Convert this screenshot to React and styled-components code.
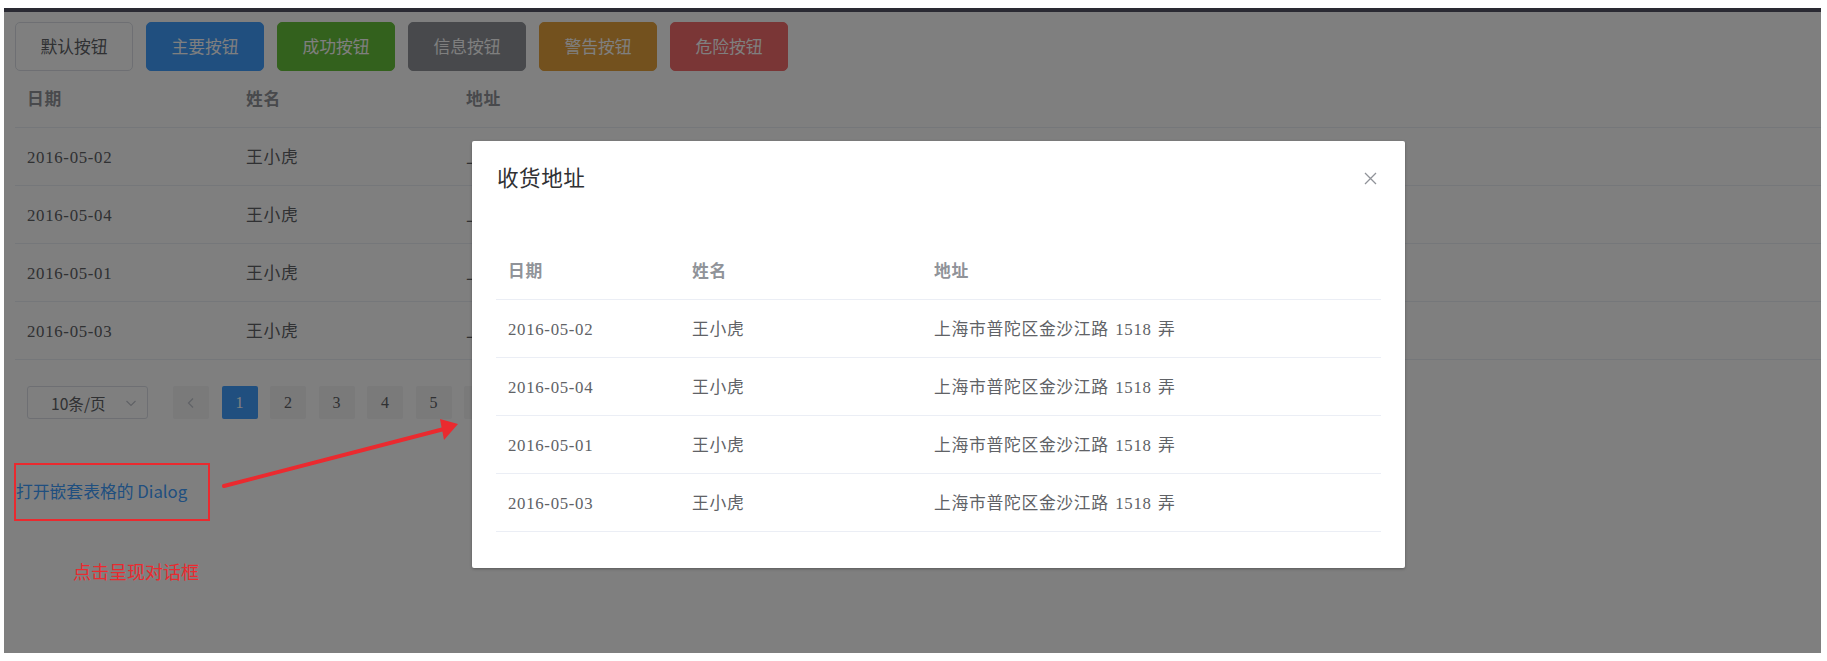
import React from 'react';
import styled, { createGlobalStyle } from 'styled-components';

const Global = createGlobalStyle`
  html, body { margin: 0; padding: 0; background: #fff; }
  body { width: 1827px; height: 661px; overflow: hidden; font-family: "Noto Sans CJK SC", sans-serif; }
  * { box-sizing: border-box; }
`;

const SANS = `"Noto Sans CJK SC", "Liberation Sans", sans-serif`;
const SERIF = `"Liberation Serif", "Noto Sans CJK SC", serif`;

const Shot = styled.div`
  position: relative;
  width: 1827px;
  height: 661px;
  padding: 8px 6px 8px 4px;
`;

const Frame = styled.div`
  position: relative;
  height: 100%;
  border-top: 4px solid #2a2a33;
  background: #fff;
  overflow: hidden;
`;

const Page = styled.div`
  padding: 10px 0 0 11px;
  display: flex;
  flex-direction: column;
  align-items: flex-start;
`;

const ButtonRow = styled.div`
  display: flex;
  gap: 13px;
`;

const variants = {
  default: { bg: '#fff', border: '#dcdfe6', color: '#606266' },
  primary: { bg: '#409eff', border: '#409eff', color: '#fff' },
  success: { bg: '#67c23a', border: '#67c23a', color: '#fff' },
  info: { bg: '#909399', border: '#909399', color: '#fff' },
  warning: { bg: '#e6a23c', border: '#e6a23c', color: '#fff' },
  danger: { bg: '#f56c6c', border: '#f56c6c', color: '#fff' },
};

const Btn = styled.button`
  width: 118px;
  height: 49px;
  padding: 0;
  border-radius: 5px;
  font-family: ${SANS};
  font-size: 16.8px;
  line-height: 1;
  background: ${(p) => variants[p.$type].bg};
  border: 1px solid ${(p) => variants[p.$type].border};
  color: ${(p) => variants[p.$type].color};
`;

const Table = styled.div`
  width: 100%;
`;

const Row = styled.div`
  display: grid;
  grid-template-columns: ${(p) => p.$cols};
  height: ${(p) => p.$h}px;
  border-bottom: 1px solid #ebeef5;
  align-items: center;
`;

const Cell = styled.div`
  padding: 2px 0 0 12px;
  font-family: ${SERIF};
  font-size: 16.8px;
  line-height: 20px;
  letter-spacing: 0.7px;
  word-spacing: 1.5px;
  white-space: nowrap;
  overflow: hidden;
  color: ${(p) => (p.$head ? '#909399' : '#606266')};
  font-weight: ${(p) => (p.$head ? 700 : 400)};
`;

const Pager = styled.div`
  display: flex;
  align-items: center;
  margin-top: 26px;
  padding-left: 12px;
`;

const SizeSelect = styled.div`
  width: 121px;
  height: 33px;
  border: 1px solid #dcdfe6;
  border-radius: 3px;
  display: flex;
  align-items: center;
  justify-content: space-between;
  padding: 0 10px 0 23px;
  margin-right: 25px;
  font-family: ${SANS};
  font-size: 15.6px;
  color: #606266;
`;

const Pages = styled.div`
  display: flex;
  gap: 12.5px;
`;

const PageBtn = styled.div`
  width: 36px;
  height: 33px;
  border-radius: 2px;
  display: flex;
  align-items: center;
  justify-content: center;
  font-family: ${SERIF};
  font-size: 16px;
  background: ${(p) => (p.$active ? '#409eff' : '#f4f4f5')};
  color: ${(p) => (p.$active ? '#fff' : '#606266')};
`;

const DialogLink = styled.a`
  display: block;
  margin-top: 61px;
  margin-left: 1px;
  font-family: ${SANS};
  font-size: 16.8px;
  line-height: 22px;
  color: #409eff;
  text-decoration: none;
`;

const Mask = styled.div`
  position: absolute;
  inset: 0;
  background: rgba(0, 0, 0, 0.5);
`;

const Dialog = styled.div`
  position: absolute;
  left: 472px;
  top: 141px;
  width: 933px;
  background: #fff;
  border-radius: 2px;
  box-shadow: 0 1px 3px rgba(0, 0, 0, 0.3);
`;

const DialogHeader = styled.div`
  display: flex;
  align-items: center;
  justify-content: space-between;
  padding: 24px 28px 12px 25px;
  height: 65px;
`;

const DialogTitle = styled.span`
  font-family: ${SERIF};
  font-size: 21.6px;
  line-height: 29px;
  letter-spacing: 0.5px;
  color: #303133;
`;

const CloseWrap = styled.span`
  display: flex;
  margin-top: -2px;
`;

const DialogBody = styled.div`
  padding: 36px 24px 36px;
`;

const Annot = styled.div`
  position: absolute;
  inset: 0;
  pointer-events: none;
`;

const RedBox = styled.div`
  position: absolute;
  left: 14px;
  top: 463px;
  width: 196px;
  height: 58px;
  border: 2px solid #ea2a2f;
`;

const RedNote = styled.div`
  position: absolute;
  left: 73px;
  top: 560px;
  font-family: ${SANS};
  font-size: 18px;
  line-height: 22px;
  color: #ea2a2f;
`;

const ArrowSvg = styled.svg`
  position: absolute;
  left: 0;
  top: 0;
`;

const Chevron = ({ dir, color, size = 12 }) => (
  <svg width={size} height={size} viewBox="0 0 12 12" fill="none" stroke={color} strokeWidth="1.2">
    {dir === 'down' ? <path d="M1.5 4l4.5 4.5L10.5 4" /> : <path d="M8 1.5L3.5 6 8 10.5" />}
  </svg>
);

const CloseIcon = () => (
  <svg width="13" height="13" viewBox="0 0 13 13" stroke="#909399" strokeWidth="1.3">
    <path d="M1 1l11 11M12 1L1 12" />
  </svg>
);

const rows = [
  ['2016-05-02', '王小虎', '上海市普陀区金沙江路 1518 弄'],
  ['2016-05-04', '王小虎', '上海市普陀区金沙江路 1518 弄'],
  ['2016-05-01', '王小虎', '上海市普陀区金沙江路 1518 弄'],
  ['2016-05-03', '王小虎', '上海市普陀区金沙江路 1518 弄'],
];

const buttons = [
  ['default', '默认按钮'],
  ['primary', '主要按钮'],
  ['success', '成功按钮'],
  ['info', '信息按钮'],
  ['warning', '警告按钮'],
  ['danger', '危险按钮'],
];

function DataTable({ cols, headH, rowH }) {
  return (
    <Table>
      <Row $cols={cols} $h={headH}>
        <Cell $head>日期</Cell>
        <Cell $head>姓名</Cell>
        <Cell $head>地址</Cell>
      </Row>
      {rows.map((r, i) => (
        <Row key={i} $cols={cols} $h={rowH}>
          <Cell>{r[0]}</Cell>
          <Cell>{r[1]}</Cell>
          <Cell>{r[2]}</Cell>
        </Row>
      ))}
    </Table>
  );
}

export default function App() {
  return (
    <>
      <Global />
      <Shot>
        <Frame>
          <Page>
            <ButtonRow>
              {buttons.map(([t, l]) => (
                <Btn key={t} $type={t}>{l}</Btn>
              ))}
            </ButtonRow>
            <DataTable cols="219px 220px 1fr" headH={57} rowH={58} />
            <Pager>
              <SizeSelect>
                <span>10条/页</span>
                <Chevron dir="down" color="#c0c4cc" />
              </SizeSelect>
              <Pages>
                <PageBtn><Chevron dir="left" color="#c0c4cc" /></PageBtn>
                {[1, 2, 3, 4, 5, 6].map((n) => (
                  <PageBtn key={n} $active={n === 1}>{n}</PageBtn>
                ))}
              </Pages>
            </Pager>
            <DialogLink>打开嵌套表格的 Dialog</DialogLink>
          </Page>
          <Mask />
        </Frame>
        <Dialog>
          <DialogHeader>
            <DialogTitle>收货地址</DialogTitle>
            <CloseWrap><CloseIcon /></CloseWrap>
          </DialogHeader>
          <DialogBody>
            <DataTable cols="184px 242px 1fr" headH={58} rowH={58} />
          </DialogBody>
        </Dialog>
        <Annot>
          <RedBox />
          <RedNote>点击呈现对话框</RedNote>
          <ArrowSvg width="1827" height="661">
            <line x1="224" y1="486" x2="444" y2="429" stroke="#ea2a2f" strokeWidth="4" strokeLinecap="round" />
            <polygon points="458,424 440,419 444,440" fill="#ea2a2f" />
          </ArrowSvg>
        </Annot>
      </Shot>
    </>
  );
}
